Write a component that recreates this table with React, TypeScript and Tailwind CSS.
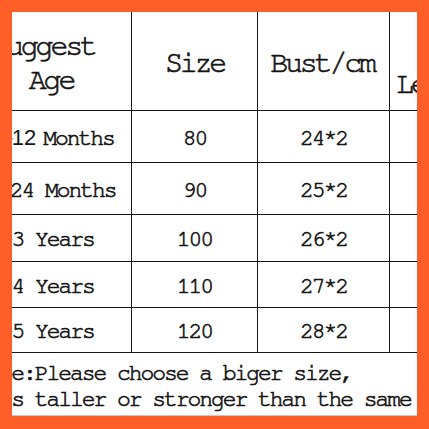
const mono = "font-['Nimbus_Mono_PS','FreeMono','Courier_New','Liberation_Mono',monospace]";

type Row = { age: React.ReactNode; size: string; bust: string; h: string; pad: string };

const rows: Row[] = [
  {
    age: (
      <>
        9-
        <span className="mr-[7px] font-['Liberation_Sans',Arial,sans-serif] text-[22px] tracking-normal [-webkit-text-stroke:0px]">
          12
        </span>
        Months
      </>
    ),
    size: "80",
    bust: "24*2",
    h: "h-[52px]",
    pad: "pl-[16px]",
  },
  { age: "12-24 Months", size: "90", bust: "25*2", h: "h-[52px]", pad: "pl-[4px]" },
  { age: "2-3 Years", size: "100", bust: "26*2", h: "h-[47px]", pad: "pr-[4px]" },
  { age: "3-4 Years", size: "110", bust: "27*2", h: "h-[46px]", pad: "pr-[4px]" },
  { age: "4-5 Years", size: "120", bust: "28*2", h: "h-[45px]", pad: "pr-[4px]" },
];

export default function App() {
  return (
    <div className="h-[429px] w-[429px] bg-[#fe5e28] p-[12px] pb-[13px]">
      <div className={`h-full w-full overflow-hidden bg-white text-[#141414] [-webkit-text-stroke:0.65px_#141414] ${mono}`}>
        <div className="ml-[-57px] grid w-[567px] grid-cols-[177px_126px_132px_132px]">
          {/* header */}
          <div className="flex h-[99px] flex-col items-center justify-center border-r border-b border-[#151515] pt-[4px] text-[30px] leading-[34px] tracking-[-3.2px]">
            <div>Suggest</div>
            <div className="pl-[16px]">Age</div>
          </div>
          <div className="flex h-[99px] items-center justify-center border-r border-b border-[#151515] pt-[4px] text-[30px] leading-none tracking-[-3.2px]">
            Size
          </div>
          <div className="flex h-[99px] items-center justify-center border-r border-b border-[#151515] pt-[4px] pr-[3px] text-[30px] leading-none tracking-[-3.2px]">
            Bust/cm
          </div>
          <div className="h-[99px] border-b border-[#151515] pt-[57px] pl-[6px] text-[30px] leading-none tracking-[-3.2px] whitespace-nowrap">
            Length/cm
          </div>

          {rows.map((r) => (
            <div key={r.size} className="contents">
              <div className={`flex ${r.h} items-center justify-center border-r border-b border-[#151515] pt-[3px] ${r.pad} text-[23px] leading-none tracking-[-2.05px] whitespace-pre`}>
                {r.age}
              </div>
              <div className={`flex ${r.h} items-center justify-center border-r border-b border-[#151515] pt-[3px] text-[23px] leading-none tracking-[-2.05px]`}>
                {r.size}
              </div>
              <div className={`flex ${r.h} items-center justify-center border-r border-b border-[#151515] pt-[3px] text-[23px] leading-none tracking-[-2.05px]`}>
                {r.bust}
              </div>
              <div className={`${r.h} border-b border-[#151515]`} />
            </div>
          ))}

          {/* note */}
          <div className="col-span-4 h-[63px] border-b border-[#c8c8c8] pt-[8px] pl-[21px] text-[23px] leading-[26px] tracking-[-2.05px] whitespace-pre">
            <div>Note:Please choose a biger size,</div>
            <div>It's taller or stronger than the same age</div>
          </div>
        </div>
      </div>
    </div>
  );
}
